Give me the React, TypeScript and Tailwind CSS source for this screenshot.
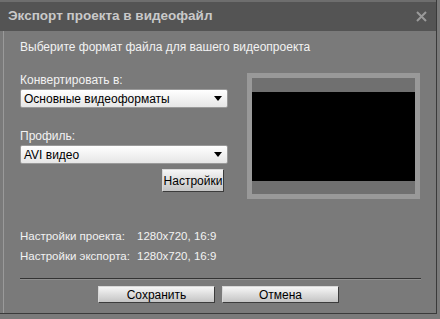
import React from "react";

function Select({ value }: { value: string }) {
  return (
    <div className="h-[19px] w-[208px] rounded-[2px] border border-[#9a9a9a] bg-gradient-to-b from-[#ffffff] to-[#e6e6e6] flex items-center justify-between pl-[3px] pr-[5px]">
      <span className="text-[12px] leading-none text-black">{value}</span>
      <svg width="8" height="5" viewBox="0 0 8 5">
        <polygon points="0,0 8,0 4,5" fill="#000" />
      </svg>
    </div>
  );
}

function Btn({ label, className }: { label: string; className: string }) {
  return (
    <div
      className={
        "flex items-center justify-center border border-[#3c3c3c] border-t-[#d8d8d8] border-l-[#d8d8d8] bg-gradient-to-b from-[#f6f6f6] to-[#c4c4c4] leading-none text-black " +
        className
      }
    >
      {label}
    </div>
  );
}

export default function App() {
  return (
    <div
      className="w-[440px] h-[319px] bg-[#7a7a7a] overflow-hidden"
      style={{ fontFamily: '"Liberation Sans", Arial, sans-serif' }}
    >
      <div className="w-[437px] h-[314px] flex flex-col border-r border-b border-[#3a3a3a]">
        <div className="h-[31px] bg-[#545454] border-t-2 border-[#6e6e6e] flex items-center justify-between pl-[8px] pr-[9px]">
          <span className="text-[13.5px] font-bold text-[#c9c9c9]">
            Экспорт проекта в видеофайл
          </span>
          <svg width="11" height="11" viewBox="0 0 11 11">
            <path d="M1 1 L10 10 M10 1 L1 10" stroke="#9a9a9a" strokeWidth="2" />
          </svg>
        </div>
        <div className="flex-1 flex flex-col border-l border-[#9a9a9a] ml-[3px] pl-[16px] pr-[15px]">
          <div className="mt-[9px] h-[14px] text-[12px] leading-[14px] text-[#f2f2f2]">
            Выберите формат файла для вашего видеопроекта
          </div>
          <div className="mt-[19px] flex">
            <div className="w-[208px] flex flex-col">
              <div className="h-[14px] text-[12px] leading-[14px] text-[#f2f2f2]">Конвертировать в:</div>
              <div className="mt-[2px]">
                <Select value="Основные видеоформаты" />
              </div>
              <div className="mt-[21px] h-[14px] text-[12px] leading-[14px] text-[#f2f2f2]">Профиль:</div>
              <div className="mt-[2px]">
                <Select value="AVI видео" />
              </div>
              <div className="mt-[5px] flex justify-end pr-[4px]">
                <Btn label="Настройки" className="w-[62px] h-[23px] text-[12px]" />
              </div>
            </div>
            <div className="ml-[19px] w-[173px] h-[126px] border-[5px] border-[#999999] bg-[#707070] flex items-center">
              <div className="w-full h-[89px] bg-black" />
            </div>
          </div>
          <div className="mt-[30px] flex flex-col gap-[6px] text-[11.5px] leading-[14px] text-[#f2f2f2]">
            <div className="flex">
              <span className="w-[117px] shrink-0 whitespace-nowrap">Настройки проекта:</span>
              <span>1280x720, 16:9</span>
            </div>
            <div className="flex">
              <span className="w-[117px] shrink-0 whitespace-nowrap">Настройки экспорта:</span>
              <span>1280x720, 16:9</span>
            </div>
          </div>
          <div className="mt-[15px] h-[2px] border-t border-[#333333] border-b border-b-[#8e8e8e] w-[401px]" />
          <div className="mt-[6px] flex justify-center gap-[7px] pr-[4px]">
            <Btn label="Сохранить" className="w-[117px] h-[17px] text-[12px]" />
            <Btn label="Отмена" className="w-[117px] h-[17px] text-[12px]" />
          </div>
        </div>
      </div>
    </div>
  );
}
